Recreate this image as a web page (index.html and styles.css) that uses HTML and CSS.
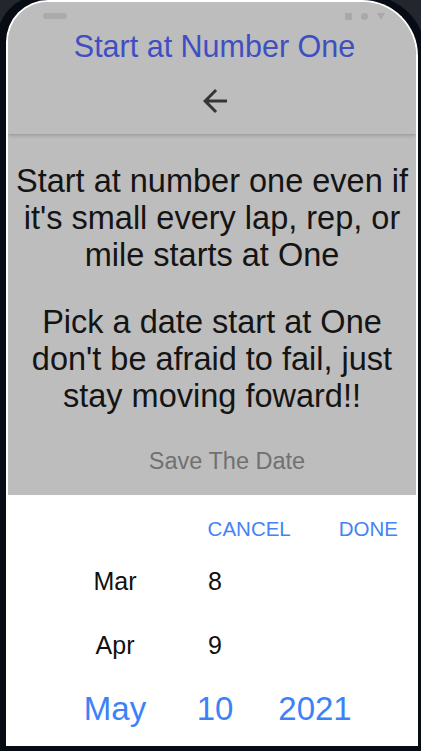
FILE: index.html
```html
<!DOCTYPE html>
<html lang="en">
<head>
<meta charset="utf-8">
<title>Start at Number One</title>
<link rel="stylesheet" href="styles.css">
</head>
<body>
<div class="device">
  <div class="screen">
    <header class="appbar">
      <div class="statusbar">
        <span class="pill"></span>
        <div class="sys">
          <span class="sq"></span>
          <span class="dot"></span>
          <span class="tri"></span>
        </div>
      </div>
      <h1 class="title">Start at Number One</h1>
      <div class="back" aria-label="Back">
        <svg viewBox="0 0 24 24" width="36" height="36"><path d="M20 11H7.83l5.59-5.59L12 4l-8 8 8 8 1.41-1.41L7.83 13H20v-2z" fill="#353535"/></svg>
      </div>
    </header>
    <main class="content">
      <p class="quote">Start at number one even if it's small every lap, rep, or mile starts at One</p>
      <p class="quote second">Pick a date start at One don't be afraid to fail, just stay moving foward!!</p>
      <p class="save">Save The Date</p>
    </main>
    <section class="picker">
      <div class="actions">
        <span class="action">CANCEL</span>
        <span class="action">DONE</span>
      </div>
      <div class="wheel">
        <span class="cell">Mar</span><span class="cell">8</span><span class="cell"></span>
        <span class="cell">Apr</span><span class="cell">9</span><span class="cell"></span>
        <span class="cell sel">May</span><span class="cell sel">10</span><span class="cell sel">2021</span>
      </div>
    </section>
  </div>
</div>
</body>
</html>
```
FILE: styles.css
```css
html, body {
  margin: 0;
  padding: 0;
  height: 751px;
  overflow: hidden;
  background: #23262c;
  font-family: "Liberation Sans", Arial, sans-serif;
}

.device {
  width: 429px;
  margin: -5px 0 0 -3px;
  padding: 5px 0 20px 9px;
  box-sizing: border-box;
  background: #060b14;
  border-radius: 45px 60px 0 0;
}

.screen {
  width: 412px;
  height: 746px;
  box-sizing: border-box;
  border: 2px solid #ffffff;
  border-bottom: none;
  border-radius: 42px 56px 0 0;
  background: #bdbdbd;
  overflow: hidden;
  display: flex;
  flex-direction: column;
}

.appbar {
  height: 132px;
  position: relative;
  z-index: 1;
  box-shadow: 0 2px 3px rgba(0, 0, 0, 0.16);
  background: #bdbdbd;
  display: flex;
  flex-direction: column;
  align-items: center;
  padding-left: 5px;
  box-sizing: border-box;
}

.statusbar {
  align-self: stretch;
  height: 24px;
  padding: 11px 31px 0 30px;
  box-sizing: border-box;
  display: flex;
  justify-content: space-between;
  align-items: flex-start;
}

.pill {
  width: 24px;
  height: 6px;
  border-radius: 3px;
  background: #ababab;
}

.sys {
  display: flex;
  gap: 9px;
  align-items: flex-start;
}

.sq {
  width: 7px;
  height: 7px;
  background: #a9a9a9;
}

.dot {
  width: 7px;
  height: 7px;
  border-radius: 50%;
  background: #a9a9a9;
}

.tri {
  width: 0;
  height: 0;
  border-left: 4px solid transparent;
  border-right: 4px solid transparent;
  border-top: 7px solid #a9a9a9;
}

.title {
  margin: 2px 0 0;
  font-size: 30.5px;
  line-height: 36px;
  font-weight: normal;
  color: #3f4fc2;
}

.back {
  margin-top: 19px;
  width: 36px;
  height: 36px;
}

.back svg {
  display: block;
}

.content {
  padding: 29px 4px 0;
  text-align: center;
}

.quote {
  margin: 0;
  font-size: 32.5px;
  line-height: 37px;
  color: #141414;
}

.quote.second {
  margin-top: 30px;
}

.save {
  margin: 32px 0 0;
  padding-left: 30px;
  font-size: 23.5px;
  line-height: 28px;
  color: #717171;
}

.picker {
  margin-top: 20px;
  flex: 1;
  background: #ffffff;
}

.actions {
  display: flex;
  justify-content: flex-end;
  gap: 48px;
  padding: 20px 18px 6px 0;
  font-size: 20.5px;
  line-height: 28px;
  color: #4583f5;
}

.wheel {
  display: grid;
  grid-template-columns: repeat(3, 100px);
  grid-auto-rows: 64px;
  margin-left: 57px;
}

.cell {
  text-align: center;
  font-size: 25px;
  line-height: 64px;
  color: #111111;
}

.cell.sel {
  font-size: 33px;
  color: #3d81f6;
}
```
